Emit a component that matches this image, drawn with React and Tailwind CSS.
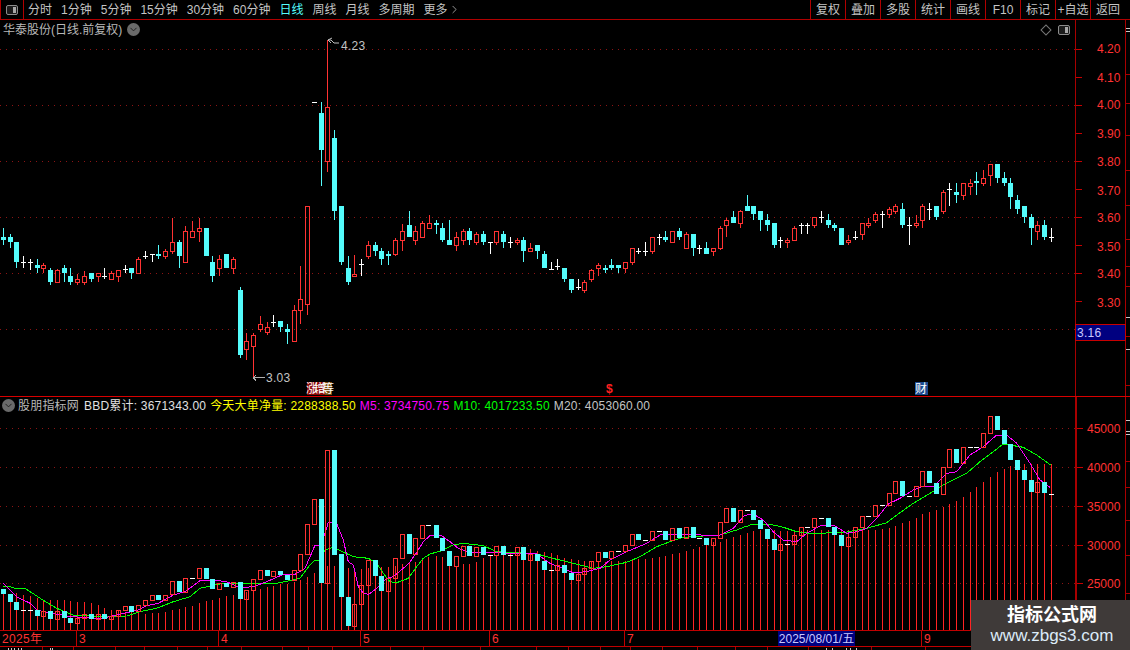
import React from 'react'
import { ChevronDown, ChevronRight } from 'lucide-react'

const RED = '#ff3232'
const CYAN = '#54fcfc'
const GRID = '#8c1414'

// candles read off the chart: [x, type, wick top, body top, body bottom, wick bottom]
const seg = (x0, y0, rows) =>
  rows.map(([z, t, a, b, c, d]) => ({
    x: Math.floor(x0 + z / 3) + 0.5,
    t,
    wt: Math.round(y0 + a / 3),
    bt: Math.round(y0 + b / 3),
    bb: Math.round(y0 + c / 3),
    wb: Math.round(y0 + d / 3),
  }))

const upper = [
  ...seg(0, 200, [
    [10, 'c', 84, 111, 120, 135], [31, 'c', 102, 111, 126, 144], [49, 'c', 126, 126, 186, 204], [69, 'w', 168, 186, 186, 204],
    [90, 'w', 177, 186, 186, 210], [112, 'c', 177, 195, 204, 219], [130, 'r', 189, 195, 207, 219], [151, 'c', 204, 210, 246, 255],
    [172, 'r', 207, 210, 249, 249], [193, 'c', 195, 204, 219, 246], [211, 'c', 204, 228, 246, 255], [232, 'r', 222, 237, 249, 255],
    [253, 'r', 213, 228, 249, 255], [274, 'c', 219, 219, 237, 246], [295, 'r', 219, 219, 231, 246], [313, 'w', 204, 228, 228, 237],
    [334, 'r', 213, 219, 240, 240], [355, 'r', 210, 210, 231, 246], [376, 'w', 195, 207, 207, 219], [394, 'c', 204, 204, 219, 237],
    [415, 'r', 171, 177, 222, 222], [436, 'w', 153, 168, 168, 177], [457, 'w', 162, 162, 162, 186], [475, 'c', 135, 162, 168, 177],
    [496, 'r', 147, 153, 171, 177], [517, 'r', 54, 126, 156, 162], [538, 'c', 120, 126, 168, 204], [556, 'r', 78, 93, 189, 189],
    [577, 'r', 63, 93, 114, 114], [598, 'r', 54, 84, 96, 126], [619, 'c', 84, 84, 168, 168], [637, 'c', 168, 186, 228, 246],
    [658, 'r', 165, 177, 207, 228], [679, 'c', 162, 162, 204, 204], [700, 'r', 171, 177, 207, 222], [721, 'c', 261, 270, 465, 474],
    [739, 'r', 399, 423, 450, 480], [760, 'r', 399, 405, 441, 531], [781, 'r', 348, 372, 390, 396], [802, 'r', 366, 381, 399, 405],
    [820, 'w', 345, 366, 366, 381], [841, 'c', 363, 363, 381, 396], [862, 'c', 372, 387, 396, 432], [883, 'r', 315, 330, 426, 426],
    [901, 'r', 198, 297, 333, 372], [922, 'r', 18, 18, 315, 345],
  ]),
  ...seg(290, 30, [
    [72, 'w', 217, 217, 217, 217], [94, 'c', 216, 249, 360, 468], [112, 'r', 30, 232, 395, 426], [133, 'c', 300, 324, 543, 570],
  ]),
  ...seg(0, 200, [
    [1024, 'c', 18, 18, 186, 195], [1045, 'c', 168, 204, 246, 255], [1063, 'r', 165, 222, 231, 231], [1084, 'w', 177, 192, 192, 228],
    [1105, 'r', 123, 135, 171, 177],
  ]),
  ...seg(370, 150, [
    [16, 'c', 276, 285, 303, 318], [34, 'c', 294, 303, 327, 345], [55, 'c', 303, 312, 318, 345], [76, 'r', 264, 270, 315, 318],
    [97, 'r', 222, 243, 273, 303], [118, 'c', 183, 225, 261, 261], [136, 'r', 228, 243, 273, 285], [157, 'r', 213, 219, 264, 264],
    [178, 'r', 195, 219, 237, 237], [199, 'c', 210, 219, 225, 252], [217, 'c', 219, 234, 270, 276], [238, 'c', 210, 270, 285, 285],
    [259, 'r', 246, 261, 288, 303], [280, 'r', 237, 243, 273, 285], [298, 'c', 234, 243, 270, 285], [319, 'r', 246, 252, 279, 285],
    [340, 'c', 243, 252, 276, 285], [361, 'w', 276, 276, 276, 312], [379, 'r', 243, 243, 279, 285], [400, 'c', 243, 252, 276, 294],
    [421, 'w', 261, 276, 276, 294], [442, 'r', 264, 270, 279, 285], [460, 'c', 261, 270, 303, 336], [481, 'r', 279, 294, 306, 306],
    [502, 'c', 285, 285, 303, 327], [523, 'c', 303, 312, 354, 354], [544, 'w', 336, 357, 357, 360], [562, 'w', 327, 348, 348, 360],
    [583, 'c', 354, 354, 387, 396], [604, 'c', 387, 387, 420, 429], [625, 'w', 387, 411, 411, 420], [643, 'r', 390, 396, 423, 429],
    [664, 'r', 357, 360, 390, 396], [685, 'r', 339, 345, 357, 378], [706, 'c', 345, 354, 360, 369], [724, 'c', 327, 345, 354, 360],
    [745, 'c', 345, 345, 354, 369], [766, 'r', 336, 336, 357, 369], [787, 'r', 294, 294, 339, 345], [805, 'w', 294, 303, 303, 312],
    [826, 'w', 276, 303, 303, 318], [847, 'r', 261, 261, 306, 312], [868, 'w', 252, 261, 261, 285], [886, 'c', 243, 261, 270, 276],
    [907, 'r', 243, 243, 279, 279], [928, 'c', 234, 243, 261, 270], [949, 'r', 246, 252, 297, 297], [970, 'c', 252, 252, 294, 318],
    [988, 'w', 285, 294, 294, 312], [1009, 'c', 276, 294, 312, 312], [1030, 'r', 294, 294, 306, 318], [1051, 'r', 228, 234, 297, 300],
    [1069, 'r', 204, 210, 228, 261], [1090, 'c', 183, 201, 219, 219], [1111, 'r', 180, 183, 222, 234], [1132, 'c', 135, 168, 183, 183],
  ]),
  ...seg(740, 150, [
    [40, 'c', 168, 168, 192, 210], [61, 'c', 183, 183, 210, 243], [82, 'c', 192, 210, 225, 243], [103, 'c', 219, 219, 285, 294],
    [121, 'w', 261, 270, 270, 294], [142, 'r', 264, 270, 279, 294], [163, 'r', 228, 234, 273, 273], [184, 'w', 219, 225, 225, 252],
    [202, 'w', 219, 225, 225, 252], [223, 'r', 201, 201, 228, 234], [244, 'w', 183, 201, 201, 219], [265, 'c', 192, 210, 225, 234],
    [283, 'c', 219, 225, 234, 243], [304, 'c', 234, 234, 285, 285], [325, 'r', 255, 270, 279, 285], [346, 'w', 243, 261, 261, 270],
    [367, 'r', 219, 219, 255, 270], [385, 'r', 204, 219, 228, 234], [406, 'r', 186, 192, 213, 219], [427, 'w', 183, 192, 192, 234],
    [448, 'r', 171, 177, 195, 204], [466, 'r', 162, 168, 186, 192], [487, 'c', 159, 177, 225, 234], [508, 'w', 201, 225, 225, 285],
    [529, 'r', 195, 219, 228, 234], [547, 'r', 162, 168, 213, 234], [568, 'w', 159, 177, 177, 210], [589, 'c', 168, 168, 201, 210],
    [610, 'r', 120, 126, 186, 192], [628, 'w', 99, 117, 117, 168], [649, 'c', 99, 126, 135, 159], [670, 'r', 99, 99, 138, 150],
    [691, 'r', 87, 99, 111, 135], [709, 'c', 66, 93, 99, 135], [730, 'r', 60, 84, 102, 108], [751, 'r', 42, 42, 78, 108],
    [772, 'c', 42, 42, 84, 99], [793, 'c', 66, 84, 99, 108], [811, 'c', 84, 99, 141, 177], [832, 'c', 135, 150, 177, 192],
    [853, 'c', 168, 168, 201, 219], [874, 'c', 192, 201, 234, 285], [892, 'r', 213, 225, 246, 270], [913, 'c', 210, 225, 261, 270],
    [933, 'w', 234, 261, 261, 276],
  ]),
]

// lower pane: [x, type, body top, body bottom, volume bar top]
const low = (x0, y0, rows) =>
  rows.map(([z, t, b, c, v]) => ({
    x: Math.floor(x0 + z / 3) + 0.5,
    t,
    bt: Math.round(y0 + b / 3),
    bb: Math.round(y0 + c / 3),
    v: Math.round(y0 + v / 3),
  }))

const lower = [
  ...low(0, 440, [
    [10, 'c', 447, 462, 462], [31, 'c', 462, 486, 486], [49, 'c', 486, 510, 460], [69, 'w', 511, 511, 465], [90, 'w', 511, 511, 468],
    [112, 'c', 510, 528, 474], [130, 'r', 514, 530, 480], [151, 'c', 514, 537, 480], [172, 'r', 514, 540, 480], [193, 'c', 514, 534, 480],
    [211, 'c', 534, 549, 483], [232, 'r', 534, 552, 486], [253, 'r', 522, 537, 486], [274, 'c', 522, 537, 489], [295, 'r', 522, 540, 495],
    [313, 'c', 522, 537, 504], [334, 'r', 528, 540, 510], [355, 'r', 510, 531, 510], [376, 'r', 498, 513, 516], [394, 'c', 498, 516, 516],
    [415, 'r', 495, 516, 516], [436, 'r', 480, 498, 522], [457, 'r', 465, 483, 519], [475, 'c', 465, 480, 519], [496, 'r', 465, 483, 516],
    [517, 'r', 423, 465, 510], [538, 'c', 423, 456, 507], [556, 'r', 414, 459, 501], [577, 'w', 415, 415, 498], [598, 'r', 384, 417, 489],
    [619, 'c', 384, 417, 483], [637, 'c', 417, 447, 480], [658, 'r', 429, 450, 474], [679, 'c', 429, 441, 468], [700, 'r', 426, 444, 465],
    [721, 'c', 426, 477, 462], [739, 'r', 450, 480, 456], [760, 'r', 417, 453, 453], [781, 'r', 390, 420, 447], [802, 'c', 390, 408, 441],
    [820, 'r', 393, 411, 438], [841, 'c', 393, 405, 432], [862, 'c', 405, 420, 432], [883, 'r', 390, 423, 426], [901, 'r', 342, 393, 420],
    [922, 'r', 252, 345, 411], [943, 'r', 177, 255, 399], [964, 'c', 177, 429, 399], [982, 'r', 30, 432, 378], [1003, 'c', 30, 345, 378],
    [1024, 'c', 342, 471, 385], [1045, 'c', 471, 558, 384], [1063, 'r', 492, 561, 387], [1084, 'r', 435, 495, 387], [1105, 'r', 360, 438, 384],
  ]),
  ...low(370, 480, [
    [16, 'c', 240, 288, 262], [34, 'c', 288, 333, 262], [55, 'r', 294, 336, 260], [76, 'r', 234, 297, 258], [97, 'r', 162, 237, 252],
    [118, 'c', 162, 222, 246], [136, 'r', 174, 225, 246], [157, 'r', 135, 177, 237], [175, 'w', 135, 135, 231], [199, 'c', 135, 174, 228],
    [217, 'c', 174, 213, 231], [238, 'c', 213, 258, 240], [259, 'r', 228, 261, 258], [280, 'r', 198, 231, 252], [298, 'c', 198, 228, 252],
    [319, 'r', 201, 231, 246], [340, 'c', 201, 225, 234], [361, 'w', 226, 226, 228], [379, 'r', 198, 228, 228], [400, 'c', 198, 225, 222],
    [421, 'w', 226, 226, 216], [442, 'r', 201, 228, 216], [460, 'c', 201, 240, 216], [481, 'r', 222, 243, 207], [502, 'c', 222, 243, 213],
    [523, 'c', 243, 270, 216], [544, 'w', 271, 271, 219], [562, 'r', 255, 273, 225], [583, 'c', 255, 279, 234], [604, 'c', 279, 300, 237],
    [625, 'r', 282, 303, 240], [643, 'r', 264, 285, 243], [664, 'r', 243, 267, 243], [685, 'r', 216, 246, 246], [706, 'c', 216, 234, 246],
    [724, 'r', 213, 237, 243], [745, 'w', 214, 214, 243], [766, 'r', 195, 216, 243], [787, 'r', 162, 198, 240], [805, 'c', 162, 180, 237],
    [826, 'w', 181, 181, 237], [847, 'r', 153, 183, 234], [868, 'w', 154, 154, 231], [886, 'c', 153, 180, 228], [907, 'r', 144, 182, 222],
    [928, 'c', 144, 174, 219], [949, 'r', 141, 177, 213], [970, 'c', 141, 174, 207], [988, 'w', 175, 175, 201], [1009, 'c', 174, 195, 195],
    [1030, 'r', 174, 198, 186], [1051, 'r', 126, 177, 186], [1069, 'r', 84, 129, 177], [1090, 'c', 84, 126, 171], [1111, 'r', 90, 129, 165],
    [1132, 'w', 91, 91, 159],
  ]),
  ...low(740, 400, [
    [40, 'c', 330, 360, 393], [61, 'c', 360, 387, 390], [82, 'c', 387, 417, 393], [103, 'c', 417, 450, 390], [121, 'r', 432, 453, 393],
    [142, 'w', 433, 433, 393], [163, 'r', 405, 435, 396], [184, 'r', 381, 408, 393], [202, 'w', 382, 382, 390], [223, 'r', 354, 384, 390],
    [244, 'w', 355, 355, 390], [265, 'c', 354, 381, 390], [283, 'c', 381, 405, 390], [304, 'c', 405, 438, 390], [325, 'r', 411, 441, 390],
    [346, 'r', 381, 414, 390], [367, 'r', 348, 384, 390], [385, 'w', 349, 349, 390], [406, 'r', 315, 351, 390], [427, 'w', 316, 316, 387],
    [448, 'r', 279, 318, 384], [466, 'r', 243, 282, 378], [487, 'c', 243, 288, 369], [508, 'w', 289, 289, 363], [529, 'r', 258, 291, 354],
    [547, 'r', 213, 261, 342], [568, 'c', 213, 249, 336], [589, 'c', 249, 282, 330], [610, 'r', 201, 285, 321], [628, 'r', 147, 204, 312],
    [649, 'c', 147, 189, 303], [670, 'r', 141, 192, 291], [691, 'w', 142, 142, 276], [709, 'w', 142, 142, 261], [730, 'r', 99, 144, 246],
    [751, 'r', 48, 102, 231], [772, 'c', 48, 90, 216], [793, 'c', 90, 132, 207], [811, 'c', 132, 180, 198], [832, 'c', 180, 210, 192],
    [853, 'c', 210, 240, 192], [874, 'c', 240, 276, 192], [892, 'r', 246, 279, 192], [913, 'c', 246, 279, 192], [933, 'w', 281, 281, 192],
  ]),
]

const pts = (x0, y0, list) => list.map(([a, b]) => `${(x0 + a / 3).toFixed(1)},${(y0 + b / 3).toFixed(1)}`).join(' ')

const m5 = [
  pts(0, 440, [[10, 430], [30, 450], [50, 470], [90, 490], [110, 510], [150, 520], [190, 525], [210, 530], [250, 532], [300, 537], [340, 527], [380, 518], [415, 510], [440, 497], [475, 490], [520, 465], [555, 455], [600, 422], [640, 420], [680, 425], [720, 443], [760, 440], [800, 425], [850, 403], [885, 403], [915, 385], [945, 316], [958, 318], [975, 280], [985, 247], [1010, 250], [1030, 300], [1045, 365], [1060, 375], [1075, 440], [1090, 460], [1105, 463]]),
  pts(370, 480, [[0, 340], [20, 325], [50, 295], [70, 290], [115, 252], [135, 225], [160, 185], [180, 167], [215, 167], [240, 185], [265, 205], [300, 218], [360, 217], [420, 220], [500, 222], [540, 250], [590, 270], [610, 278], [650, 275], [690, 265], [720, 240], [770, 215], [830, 190], [870, 165], [900, 163], [990, 163], [1000, 168], [1050, 165], [1090, 145], [1125, 105]]),
  pts(740, 400, [[20, 345], [40, 342], [70, 360], [100, 395], [130, 420], [170, 425], [200, 400], [240, 378], [280, 375], [320, 400], [350, 395], [380, 385], [410, 355], [445, 312], [480, 295], [520, 270], [545, 260], [580, 260], [620, 220], [650, 215], [690, 165], [730, 140], [770, 105], [800, 105], [830, 130], [870, 190], [900, 240], [930, 262]]),
].join(' ')

const m10 = [
  pts(0, 440, [[10, 440], [30, 440], [45, 445], [75, 445], [125, 478], [170, 505], [220, 525], [300, 530], [380, 528], [420, 515], [470, 505], [520, 485], [570, 470], [600, 445], [660, 432], [720, 430], [830, 430], [870, 422], [900, 415], [930, 375], [945, 360], [960, 360], [975, 330], [1000, 322], [1060, 350], [1105, 355]]),
  pts(370, 480, [[0, 238], [20, 250], [40, 280], [60, 305], [80, 308], [115, 295], [140, 260], [160, 235], [180, 222], [215, 212], [250, 195], [280, 190], [340, 197], [380, 215], [440, 218], [500, 222], [560, 238], [610, 250], [670, 265], [710, 260], [770, 247], [810, 230], [860, 200], [900, 185], [940, 172], [1000, 168], [1050, 165], [1100, 150], [1125, 140]]),
  pts(740, 400, [[20, 380], [30, 375], [90, 373], [130, 382], [170, 395], [210, 400], [310, 398], [380, 385], [440, 368], [470, 345], [520, 310], [570, 280], [610, 255], [680, 220], [720, 185], [790, 132], [850, 142], [890, 165], [932, 195]]),
].join(' ')

const Body = ({ c }) => {
  if (c.t === 'c') return <rect x={c.x - 2.5} y={c.bt} width="5" height={Math.max(c.bb - c.bt, 1)} fill={CYAN} />
  if (c.t === 'r') return <rect x={c.x - 2} y={c.bt + 0.5} width="4" height={Math.max(c.bb - c.bt - 1, 1)} fill="none" stroke={RED} />
  return <rect x={c.x - 2.5} y={c.bt} width="5" height="1" fill="#fff" />
}

const Candle = ({ c }) => {
  const wick = c.t === 'c' ? CYAN : c.t === 'r' ? RED : '#fff'
  return (
    <g>
      <line x1={c.x} x2={c.x} y1={c.wt} y2={c.bt} stroke={wick} />
      <line x1={c.x} x2={c.x} y1={c.bb} y2={c.wb} stroke={wick} />
      <Body c={c} />
    </g>
  )
}

const Dots = ({ ys }) =>
  ys.map((y) => <line key={y} x1="0" x2="1075" y1={y + 0.5} y2={y + 0.5} stroke={GRID} strokeDasharray="1 5" />)

const ToolTab = ({ children, active }) => (
  <span className={active ? 'text-[#54fcfc]' : 'text-[#c4c4c4]'}>{children}</span>
)

const PaneIcon = () => (
  <svg width="12" height="10" viewBox="0 0 12 10">
    <rect x="0.5" y="0.5" width="11" height="9" rx="1.5" fill="#1c1c1c" stroke="#8c8c8c" />
    <rect x="7" y="2" width="3" height="6" fill="#a8a8a8" />
  </svg>
)

const RoundMenu = () => (
  <span className="flex h-[13px] w-[13px] items-center justify-center rounded-full bg-[#6a6a6a] text-[#1a1a1a]">
    <ChevronDown size={11} strokeWidth={2} />
  </span>
)

const Axis = ({ top, height, labels, ticks, edge }) => (
  <svg width="54" height={height} viewBox={`1076 ${top} 54 ${height}`} className="block shrink-0" shapeRendering="crispEdges">
    {ticks.map((y) => (
      <line key={y} x1="1076" x2="1082" y1={y + 0.5} y2={y + 0.5} stroke="#c80000" />
    ))}
    {edge.map(([y, col]) => (
      <line key={y} x1="1126" x2="1130" y1={y + 0.5} y2={y + 0.5} stroke={col} />
    ))}
    <line x1="1125.5" x2="1125.5" y1={top} y2={top + height} stroke="#a80000" />
    {labels.map(([t, x, y]) => (
      <text key={t} x={x} y={y} fill={RED} fontSize="12">
        {t}
      </text>
    ))}
  </svg>
)

const timeSegs = [
  ['2025年', 76],
  ['3', 142],
  ['4', 142],
  ['5', 129],
  ['6', 135],
  ['7', 297],
  ['9', 154],
]

export default function App() {
  return (
    <div className="relative flex h-[650px] w-[1130px] flex-col overflow-hidden bg-black font-['Liberation_Sans','Noto_Sans_CJK_SC',sans-serif] text-[12px] leading-none">
      {/* top toolbar */}
      <div className="flex h-[20px] shrink-0 items-center justify-between border-b border-[#b00000]">
        <div className="flex h-full items-center">
          <div className="flex h-full w-[24px] items-center justify-center border-x border-[#b00000]">
            <PaneIcon />
          </div>
          <div className="flex items-center gap-[9px] pl-[4px]">
            {['分时', '1分钟', '5分钟', '15分钟', '30分钟', '60分钟'].map((t) => (
              <ToolTab key={t}>{t}</ToolTab>
            ))}
            <ToolTab active>日线</ToolTab>
            {['周线', '月线', '多周期'].map((t) => (
              <ToolTab key={t}>{t}</ToolTab>
            ))}
            <span className="flex items-center text-[#c4c4c4]">
              更多
              <ChevronRight size={13} strokeWidth={1.25} className="text-[#d8d8d8]" />
            </span>
          </div>
        </div>
        <div className="flex h-full">
          {['复权', '叠加', '多股', '统计', '画线', 'F10', '标记', '+自选', '返回'].map((t) => (
            <div key={t} className="flex h-full w-[35px] items-center justify-center whitespace-nowrap border-l border-[#b00000] text-[#c4c4c4]">
              {t}
            </div>
          ))}
          <div className="w-[5px]" />
        </div>
      </div>

      {/* price pane */}
      <div className="relative flex h-[376px] shrink-0">
        <div className="absolute left-[3px] top-[3px] flex items-center gap-[5px] text-[#b8b8b8]">
          <span>华泰股份(日线.前复权)</span>
          <RoundMenu />
        </div>
        <div className="absolute left-[1042px] top-[5px] flex items-center gap-[8px]">
          <span className="h-[8px] w-[8px] rotate-45 border border-[#777]" />
          <PaneIcon />
        </div>
        <svg width="1075" height="376" viewBox="0 20 1075 376" className="block shrink-0" shapeRendering="crispEdges">
          <Dots ys={[49, 105, 161, 217, 273, 329]} />
          {upper.map((c, i) => (
            <Candle key={i} c={c} />
          ))}
          <path d="M328 40 l4 -2 M328 40 l3 3 M328 40 h3 l3 3 h5" fill="none" stroke="#c0c0c0" shapeRendering="auto" />
          <text x="341" y="50" fill="#c4c4c4" fontSize="12" letterSpacing="0.3">4.23</text>
          <path d="M253 377.5 h12 M253 377.5 l3 -2 M253 377.5 l3 3" fill="none" stroke="#b0b0b0" />
          <text x="266" y="382" fill="#c4c4c4" fontSize="12" letterSpacing="0.3">3.03</text>
          <rect x="307" y="382" width="18" height="13" fill="#8b0808" />
          <rect x="325" y="382" width="7" height="13" fill="#7a4a10" />
          <text x="306" y="393" fill="#fff" fontSize="12" letterSpacing="-4">涨增等</text>
          <text x="606" y="393" fill="#ff2020" fontSize="12" fontWeight="700">$</text>
          <rect x="915" y="382" width="13" height="13" fill="#1c4a90" />
          <text x="915" y="393" fill="#fff" fontSize="12">财</text>
        </svg>
        <div className="w-px shrink-0 bg-[#a80000]" />
        <Axis
          top={20}
          height={376}
          ticks={[49, 77, 105, 133, 161, 189, 217, 245, 273, 301]}
          edge={[[28, '#c8c8c8'], [31, '#c8c8c8'], [74, '#a80000'], [103, '#a80000'], [135, '#a80000'], [170, '#a80000'], [205, '#a80000'], [239, '#a80000'], [266, '#a80000'], [286, '#a80000'], [317, '#c8c8c8'], [336, '#a80000'], [349, '#c8c8c8'], [385, '#a80000']]}
          labels={[['4.20', 1097, 53], ['4.10', 1097, 82], ['4.00', 1097, 109], ['3.90', 1097, 138], ['3.80', 1097, 166], ['3.70', 1097, 195], ['3.60', 1097, 222], ['3.50', 1097, 251], ['3.40', 1097, 278], ['3.30', 1097, 307]]}
        />
        <div className="absolute left-[1075px] top-[304px] flex h-[17px] w-[51px] items-center border border-[#c80000] bg-[#000080] pl-[1px] tracking-[0.3px] text-[#c8c8ff]">
          3.16
        </div>
      </div>

      {/* indicator pane */}
      <div className="relative flex h-[234px] shrink-0 border-t border-[#d80000]">
        <div className="absolute left-[2px] top-[2px] flex items-center gap-[4px] whitespace-nowrap tracking-[0.2px]">
          <span className="mr-[1px] flex items-center gap-[3px] text-[#b8b8b8]">
            <RoundMenu />
            股朋指标网
          </span>
          <span className="text-[#e0e0e0]">BBD累计: 3671343.00</span>
          <span className="text-[#ffff00]">今天大单净量: 2288388.50</span>
          <span className="text-[#ff00ff]">M5: 3734750.75</span>
          <span className="text-[#00ff00]">M10: 4017233.50</span>
          <span className="text-[#c4c4c4]">M20: 4053060.00</span>
        </div>
        <svg width="1075" height="233" viewBox="0 397 1075 233" className="block shrink-0" shapeRendering="crispEdges">
          <Dots ys={[428, 467, 506, 545, 583]} />
          {lower.map((c, i) => (
            <line key={i} x1={c.x} x2={c.x} y1={c.v} y2="630" stroke="#ff2424" />
          ))}
          <polyline points={m10} fill="none" stroke="#00ff00" />
          <polyline points={m5} fill="none" stroke="#ff00ff" />
          {lower.map((c, i) => (
            <Body key={i} c={c} />
          ))}
        </svg>
        <div className="w-[2px] shrink-0 bg-[#a80000]" />
        <svg width="53" height="233" viewBox="1077 397 53 233" className="block shrink-0" shapeRendering="crispEdges">
          {[428, 467, 506, 545, 583].map((y) => (
            <line key={y} x1="1077" x2="1083" y1={y + 0.5} y2={y + 0.5} stroke="#c80000" />
          ))}
          {[[420, '#c8c8c8'], [431, '#c8c8c8'], [434, '#c8c8c8'], [461, '#a80000'], [487, '#a80000'], [520, '#a80000'], [555, '#a80000'], [593, '#a80000']].map(([y, col]) => (
            <line key={y} x1="1126" x2="1130" y1={y + 0.5} y2={y + 0.5} stroke={col} />
          ))}
          <line x1="1125.5" x2="1125.5" y1="397" y2="630" stroke="#a80000" />
          {[['45000', 433], ['40000', 472], ['35000', 511], ['30000', 550], ['25000', 588]].map(([t, y]) => (
            <text key={t} x="1087" y={y} fill={RED} fontSize="12">
              {t}
            </text>
          ))}
        </svg>
      </div>

      {/* date axis */}
      <div className="relative flex h-[17px] shrink-0 border-y border-[#c00000]">
        {timeSegs.map(([t, w], i) => (
          <div
            key={t}
            style={{ width: w }}
            className={`flex shrink-0 items-center pl-[2px] tracking-[0.3px] text-[#ff3232] ${i ? 'border-l border-[#c00000]' : ''}`}
          >
            {t}
          </div>
        ))}
        <div className="absolute left-[778px] top-0 flex h-[15px] w-[77px] items-center justify-center whitespace-nowrap bg-[#000080] text-[#c8c8ff]">
          2025/08/01/五
        </div>
      </div>
      <svg width="1130" height="3" viewBox="0 0 1130 3" className="block shrink-0" shapeRendering="crispEdges">
        {[42, 73, 115, 144, 177, 207, 241, 282, 308, 332, 390, 423, 480, 536, 568, 600, 630, 662, 697, 735, 767, 808, 871, 925].map((x) => (
          <line key={x} x1={x + 0.5} x2={x + 0.5} y1="0" y2="3" stroke="#a80000" />
        ))}
        {[8, 11, 14, 18, 21, 50, 52, 826, 832, 846, 850, 856].map((x) => (
          <line key={x} x1={x + 0.5} x2={x + 0.5} y1="1" y2="3" stroke="#c8c8c8" />
        ))}
      </svg>

      {/* site watermark */}
      <div className="absolute bottom-0 right-0 flex h-[50px] w-[159px] flex-col items-center justify-center gap-[3px] bg-[#3f3a39] pl-[3px]">
        <span className="text-[18px] font-bold text-white">指标公式网</span>
        <span className="text-[17px] text-[#dcebf8]">www.zbgs3.com</span>
      </div>
    </div>
  )
}
